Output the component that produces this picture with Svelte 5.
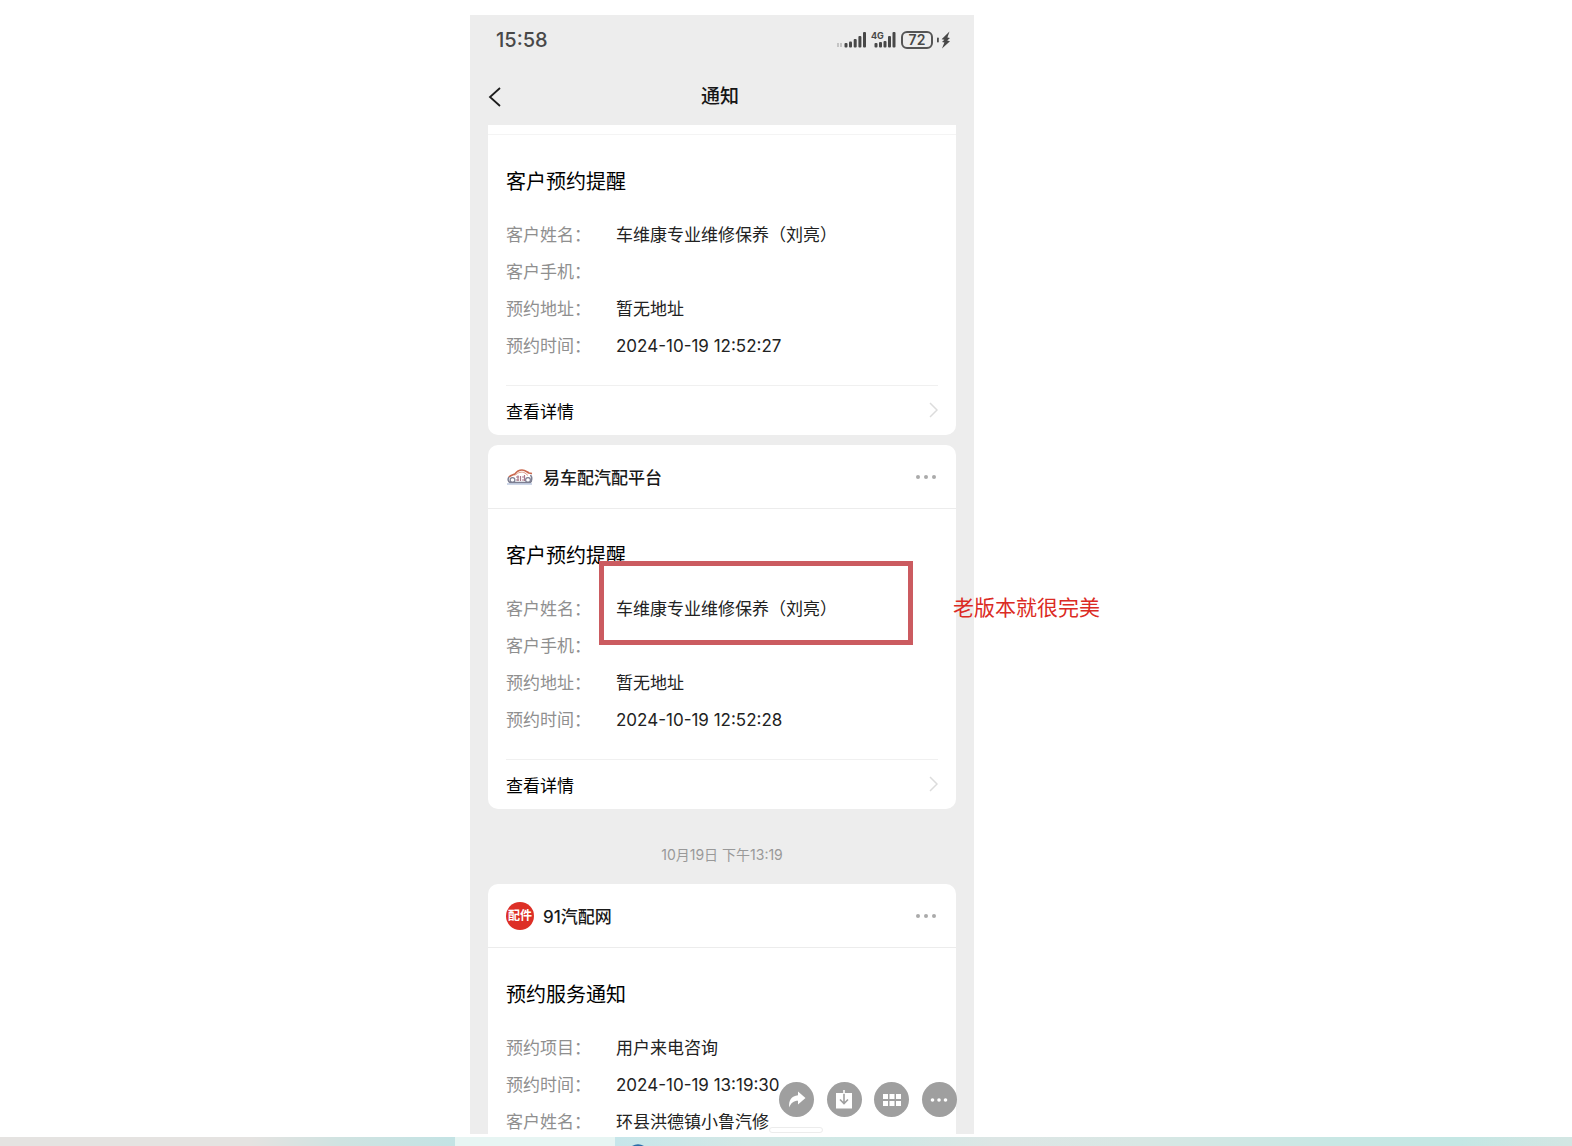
<script lang="ts">
    type Row = { label: string; value: string; marked?: boolean };
    type Card = { id: number; source?: string; logo?: string; title: string; rows: Row[]; time?: string; link: boolean };

    const note = '老版本就很完美';

    const cards: Card[] = [
        {
            id: 1,
            title: '客户预约提醒',
            rows: [
                { label: '客户姓名', value: '车维康专业维修保养（刘亮）' },
                { label: '客户手机', value: '' },
                { label: '预约地址', value: '暂无地址' },
                { label: '预约时间', value: '2024-10-19 12:52:27' }
            ],
            link: true
        },
        {
            id: 2,
            source: '易车配汽配平台',
            logo: 'car',
            title: '客户预约提醒',
            rows: [
                { label: '客户姓名', value: '车维康专业维修保养（刘亮）', marked: true },
                { label: '客户手机', value: '' },
                { label: '预约地址', value: '暂无地址' },
                { label: '预约时间', value: '2024-10-19 12:52:28' }
            ],
            link: true
        },
        {
            id: 3,
            source: '91汽配网',
            logo: 'parts',
            title: '预约服务通知',
            rows: [
                { label: '预约项目', value: '用户来电咨询' },
                { label: '预约时间', value: '2024-10-19 13:19:30' },
                { label: '客户姓名', value: '环县洪德镇小鲁汽修' }
            ],
            time: '10月19日 下午13:19',
            link: false
        }
    ];
</script>

<div class="page">
    <div class="stage">
        <main class="phone">
            <div class="status">
                <span class="clock">15:58</span>
                <div class="status-icons">
                    <svg class="signal" width="30" height="18" viewBox="0 0 30 18">
                        <g fill="#c4c4c4">
                            <rect x="0" y="12" width="2" height="4" />
                            <rect x="3" y="12" width="2" height="4" />
                        </g>
                        <g fill="#484848">
                            <rect x="7.5" y="12" width="3" height="4.6" rx="1" />
                            <rect x="12" y="10.5" width="3" height="6.1" rx="1" />
                            <rect x="16.7" y="8" width="3" height="8.6" rx="1" />
                            <rect x="21.4" y="5" width="3" height="11.6" rx="1" />
                            <rect x="26" y="1" width="3" height="15.6" rx="1" />
                        </g>
                    </svg>
                    <svg class="signal" width="26" height="18" viewBox="0 0 26 18">
                        <text x="0" y="8" font-size="9" font-weight="700" fill="#484848">4G</text>
                        <g fill="#484848">
                            <rect x="3.5" y="12" width="3" height="4.6" rx="1" />
                            <rect x="8" y="11" width="3" height="5.6" rx="1" />
                            <rect x="12.5" y="10" width="3" height="6.6" rx="1" />
                            <rect x="17" y="5" width="3" height="11.6" rx="1" />
                            <rect x="21.5" y="1" width="3" height="15.6" rx="1" />
                        </g>
                    </svg>
                    <span class="battery">72</span>
                    <svg width="14" height="18" viewBox="0 0 14 18" fill="#484848">
                        <rect x="0" y="6.5" width="1.8" height="5" rx="0.8" />
                        <path d="M12.5 0.5 L4.6 8.2 L7.400 8.700 L5 11 L7.4 11.4 L5 17.6 L13 10.200 L10.2 9.400 L13 7 L10.400 6.600 Z" />
                    </svg>
                </div>
            </div>

            <header class="nav">
                <button class="back" aria-label="返回">
                    <svg width="13" height="20" viewBox="0 0 13 20" fill="none" stroke="#1c1c1c" stroke-width="1.8">
                        <path d="M12 1 L2 10 L12 19" />
                    </svg>
                </button>
                <h1>通知</h1>
            </header>

            <section class="feed">
                {#each cards as card (card.id)}
                    {#if card.time}
                        <p class="time">{card.time}</p>
                    {/if}
                    <article class="card" class:cut={!card.source}>
                        <div class="card-head">
                            {#if card.source}
                                {#if card.logo === 'car'}
                                    <svg class="logo" width="28" height="28" viewBox="0 0 28 28" fill="none">
                                        <path d="M3 14 C5 12 7 12 9 11 C11 8 13 7 16 7 C19 7 21 9 23 10 L26 10.5" stroke="#c9684e" stroke-width="1.7" />
                                        <path d="M9 12.5 C12 9 16 8.5 19 10 L22 12.5" stroke="#dfa08c" />
                                        <path d="M3 14 C1.5 16 2 18.5 4 19.5 H24 C26.5 18 26 14 24.5 12" stroke="#7d7f92" stroke-width="1.5" />
                                        <circle cx="6.5" cy="17" r="2.4" stroke="#7d7f92" stroke-width="1.2" />
                                        <circle cx="22" cy="17" r="2.4" stroke="#7d7f92" stroke-width="1.2" />
                                        <path d="M10 14 H13 M10 17 H13 M14.5 13 V18 M16 14 H19 M16 17 H19 M12 12.5 V18 M18.500 12 V18" stroke="#a8788a" stroke-width="1.2" />
                                        <path d="M1 21 H26" stroke="#9badd0" />
                                    </svg>
                                {:else}
                                    <span class="logo round">配件</span>
                                {/if}
                                <span class="source">{card.source}</span>
                                <button class="more" aria-label="更多">
                                    <svg width="22" height="6" viewBox="0 0 22 6" fill="#aaa">
                                        <circle cx="2" cy="3" r="2" />
                                        <circle cx="10" cy="3" r="2" />
                                        <circle cx="18" cy="3" r="2" />
                                    </svg>
                                </button>
                            {/if}
                        </div>
                        <div class="card-body">
                            <h2>{card.title}</h2>
                            <dl>
                                {#each card.rows as row}
                                    <div class="row">
                                        <dt>{row.label}：</dt>
                                        <dd>{row.value}</dd>
                                        {#if row.marked}
                                            <span class="mark"></span>
                                            <span class="note">{note}</span>
                                        {/if}
                                    </div>
                                {/each}
                            </dl>
                        </div>
                        {#if card.link}
                            <a class="detail" href="#detail-{card.id}">
                                查看详情
                                <svg width="10" height="16" viewBox="0 0 10 16" fill="none" stroke="#dcdcdc" stroke-width="1.5">
                                    <path d="M2 1 L9 8 L2 15" />
                                </svg>
                            </a>
                        {/if}
                    </article>
                {/each}
            </section>

            <span class="pill"></span>
            <div class="tools">
                <button aria-label="分享">
                    <svg width="20" height="20" viewBox="0 0 20 20" fill="#fff">
                        <path d="M11 1.5 L18.5 8 L11 14.5 V10.8 C6.5 10.8 4 13 2.3 17.5 C1.3 11 4.500 5.800 11 5.300 Z" />
                    </svg>
                </button>
                <button aria-label="保存">
                    <svg width="20" height="20" viewBox="0 0 20 20" fill="none">
                        <path d="M2 3 H18 V18.5 H2 Z" fill="#fff" />
                        <path d="M10 3 V13 M6 9.5 L10 13.5 L14 9.5" stroke="#9f9f9f" stroke-width="1.6" />
                        <path d="M10 0 V4" stroke="#fff" stroke-width="1.6" />
                    </svg>
                </button>
                <button aria-label="全部">
                    <svg width="20" height="20" viewBox="0 0 20 20" fill="#fff">
                        <rect x="1" y="4" width="5" height="5" />
                        <rect x="7.5" y="4" width="5" height="5" />
                        <rect x="14" y="4" width="5" height="5" />
                        <rect x="1" y="11" width="5" height="5" />
                        <rect x="7.5" y="11" width="5" height="5" />
                        <rect x="14" y="11" width="5" height="5" />
                    </svg>
                </button>
                <button aria-label="更多操作">
                    <svg width="20" height="20" viewBox="0 0 20 20" fill="#fff">
                        <circle cx="3.5" cy="10" r="1.8" />
                        <circle cx="10" cy="10" r="1.8" />
                        <circle cx="16.5" cy="10" r="1.8" />
                    </svg>
                </button>
            </div>
        </main>
    </div>

    <footer class="taskbar">
        <span class="bar-left"></span>
        <span class="bar-tab"></span>
        <span class="bar-right">
            <svg width="12" height="2" viewBox="0 0 12 2"><path d="M0 2 Q6 -1.5 12 2 Z" fill="#2b6ca8" /></svg>
        </span>
    </footer>
</div>

<style>
    :global(body) {
        margin: 0;
        background: #fff;
        font-family: Inter, 'Noto Sans CJK SC', sans-serif;
    }

    h1, h2, p, dl, dd {
        margin: 0;
    }

    button {
        border: 0;
        padding: 0;
        background: none;
        display: flex;
        align-items: center;
        justify-content: center;
    }

    .page {
        height: 100vh;
        display: flex;
        flex-direction: column;
        overflow: hidden;
    }

    .stage {
        flex: 1;
        min-height: 0;
        display: grid;
        grid-template-columns: 470fr 504fr 598fr;
        grid-template-rows: minmax(0, 1fr);
        padding-top: 15px;
        margin-bottom: 3px;
        overflow: hidden;
    }

    .phone {
        grid-column: 2;
        position: relative;
        display: flex;
        flex-direction: column;
        min-width: 0;
        background: #ededed;
    }

    /* status bar */
    .status {
        height: 50px;
        display: flex;
        align-items: center;
        justify-content: space-between;
        padding: 0 23px 0 26px;
        color: #484848;
    }

    .clock {
        font-size: 20px;
        font-weight: 500;
    }

    .status-icons {
        display: flex;
        align-items: center;
        gap: 4px;
    }

    .battery {
        box-sizing: border-box;
        width: 32px;
        height: 18px;
        border: 2px solid #555;
        border-radius: 6px;
        font-size: 14px;
        font-weight: 600;
        line-height: 14px;
        text-align: center;
    }

    .nav {
        display: grid;
        grid-template-columns: 1fr auto 1fr;
        align-items: center;
        padding: 4px 22px 0 18px;
    }

    .back {
        justify-self: start;
    }

    h1 {
        font-size: 19px;
        font-weight: 500;
        line-height: 56px;
        color: #161616;
    }

    /* message list */
    .feed {
        flex: 1;
        min-height: 0;
        padding: 0 18px;
    }

    .card {
        background: #fff;
        border-radius: 10px;
        margin-bottom: 10px;
    }

    .card.cut {
        border-radius: 0 0 10px 10px;
    }

    .card-head {
        display: flex;
        align-items: center;
        height: 63px;
        padding: 0 18px;
        border-bottom: 1px solid #ececec;
    }

    .cut .card-head {
        height: 9px;
        border-color: #f4f4f4;
    }

    .logo {
        margin-right: 9px;
    }

    .round {
        width: 28px;
        border-radius: 50%;
        background: #dd2f26;
        color: #fff;
        font-size: 12px;
        font-weight: 700;
        line-height: 28px;
        text-align: center;
    }

    .source {
        font-size: 17px;
        font-weight: 500;
        color: #1a1a1a;
    }

    .more {
        margin-left: auto;
    }

    .card-body {
        padding: 33px 18px 20px;
    }

    h2 {
        font-size: 20px;
        font-weight: 400;
        line-height: 28px;
        margin-bottom: 21px;
        color: #000;
    }

    .row {
        position: relative;
        display: flex;
        height: 37px;
        font-size: 17px;
        line-height: 37px;
        white-space: nowrap;
    }

    dt {
        width: 110px;
        color: #8f8f8f;
    }

    dd {
        color: #222;
    }

    .detail {
        box-sizing: border-box;
        display: flex;
        align-items: center;
        justify-content: space-between;
        margin: 0 18px;
        padding-bottom: 1px;
        height: 50px;
        border-top: 1px solid #f0f0f0;
        font-size: 17px;
        color: #000;
        text-decoration: none;
    }

    .time {
        padding: 24px 0 17px;
        font-size: 14px;
        line-height: 24px;
        text-align: center;
        color: #999;
    }

    /* red annotation over the row */
    .mark {
        position: absolute;
        top: -30px;
        right: 25px;
        bottom: -17px;
        left: 93px;
        border: 5px solid #cb5b60;
    }

    .note {
        position: absolute;
        left: 100%;
        margin-left: 15px;
        font-size: 21px;
        line-height: 34px;
        color: #db2b24;
    }

    /* floating buttons */
    .tools {
        position: absolute;
        right: 17px;
        bottom: 17px;
        width: 178px;
        display: flex;
        justify-content: space-between;
    }

    .tools button {
        width: 35px;
        height: 35px;
        border-radius: 50%;
        background: #9f9f9f;
    }

    .pill {
        position: absolute;
        right: 151px;
        bottom: 1px;
        width: 52px;
        height: 4px;
        border: 1px solid #ececec;
        border-radius: 3px;
        background: #fff;
    }

    .taskbar {
        display: grid;
        grid-template-columns: 455fr 160fr 957fr;
        height: 9px;
    }

    .bar-left {
        background: linear-gradient(90deg, #e5e3e1 55%, #cfe3e1 75%, #c3e3e4);
    }

    .bar-tab {
        background: #e7f5f3;
    }

    .bar-right {
        display: flex;
        align-items: flex-end;
        padding-left: 17px;
        background: linear-gradient(90deg, #c6e6ea, #d4e8e6 14%, #cfe9e6 27%, #dde6e5 40%, #d8e7e4 55%, #c8e7e4 75%, #c4e7e4 88%, #d3e6e3);
    }
</style>
